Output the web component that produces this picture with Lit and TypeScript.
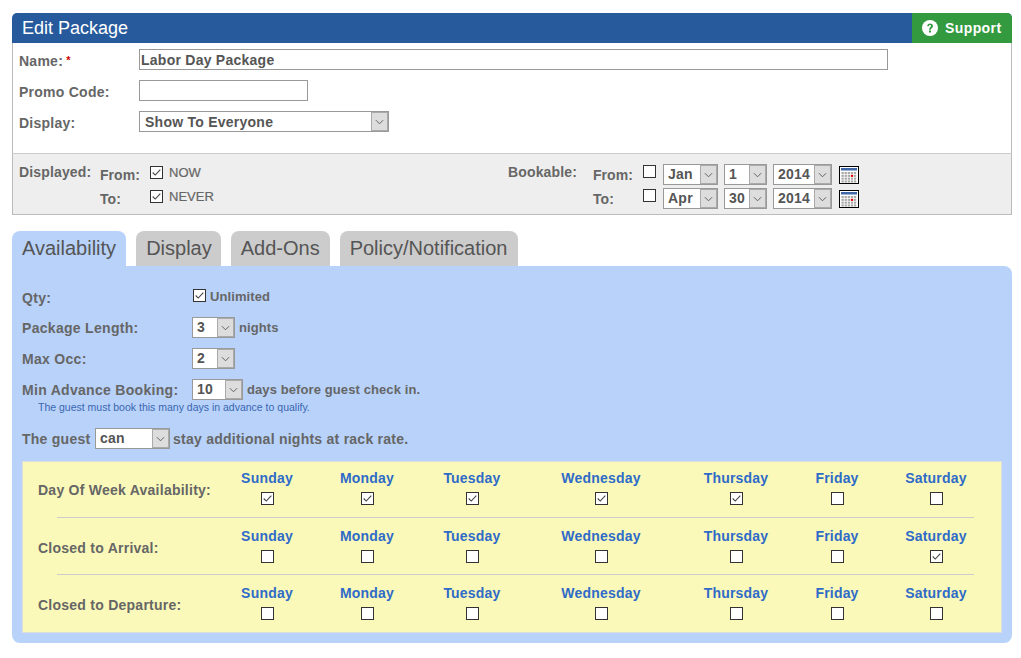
import { LitElement, html, css, svg } from "lit";
import { customElement } from "lit/decorators.js";

const check = svg`<svg class="tick" viewBox="0 0 13 13" width="11" height="11"><path d="M2 6.5 L5 9.5 L11 3" fill="none" stroke="#444" stroke-width="1.3"/></svg>`;

const cb = (on = false) => html`<span class="cb" role="checkbox" aria-checked=${on}>${on ? check : ""}</span>`;

const sel = (text: string, cls: string) => html`<span class="sel ${cls}"><span class="val">${text}</span><span class="arrow"><svg viewBox="0 0 10 6" width="9" height="6"><path d="M1 1 L5 5 L9 1" fill="none" stroke="#555" stroke-width="1"/></svg></span></span>`;

const cal = () => {
  const cells = [];
  for (let r = 0; r < 4; r++) for (let c = 0; c < 5; c++) {
    const red = r === 1 && c === 3;
    cells.push(svg`<rect x=${2.5 + c * 3.1} y=${6 + r * 2.8} width="2.3" height="2.1" fill=${red ? "#d00" : "#aaa"}/>`);
  }
  return html`<svg class="cal" viewBox="0 0 20 18" width="20" height="18"><rect x=".5" y=".5" width="19" height="17" fill="#fff" stroke="#000"/><rect x="2" y="2" width="16" height="2.5" fill="#3f67a8"/>${cells}</svg>`;
};

const DAYS = [
  ["Sunday", 100], ["Monday", 100], ["Tuesday", 110], ["Wednesday", 148],
  ["Thursday", 122], ["Friday", 80], ["Saturday", 118],
] as const;

const ROWS: { label: string; on: number[] }[] = [
  { label: "Day Of Week Availability:", on: [0, 1, 2, 3, 4] },
  { label: "Closed to Arrival:", on: [6] },
  { label: "Closed to Departure:", on: [] },
];

@customElement("app-root")
export class AppRoot extends LitElement {
  static styles = css`
    :host {
      display: block;
      box-sizing: border-box;
      width: 1021px;
      height: 658px;
      padding: 13px 9px 0 12px;
      background: #fff;
      font: bold 14px "Liberation Sans", Arial, sans-serif;
      letter-spacing: 0.25px;
      color: #666;
      overflow: hidden;
    }
    * { box-sizing: border-box; }
    .head {
      display: flex;
      justify-content: space-between;
      height: 30px;
      background: #275a9c;
      border-radius: 5px 5px 0 0;
      overflow: hidden;
    }
    .title {
      padding-left: 10px;
      font: normal 18px/30px "Liberation Sans", Arial, sans-serif;
      letter-spacing: 0;
      color: #fff;
    }
    .support {
      display: flex;
      align-items: center;
      gap: 7px;
      width: 100px;
      padding-left: 10px;
      background: #339a40;
      color: #fff;
      font-size: 14px;
      letter-spacing: 0.4px;
    }
    .form {
      height: 110px;
      padding: 6px 6px 0;
      background: #fff;
      border: 1px solid #bbb;
      border-width: 0 1px;
    }
    .frow {
      display: flex;
      align-items: center;
      height: 21px;
      margin-bottom: 10px;
    }
    .flabel { width: 120px; padding-top: 2px; }
    .req { color: #c00; font-size: 11px; position: relative; top: -2px; }
    .input {
      display: block;
      height: 21px;
      border: 1px solid #999;
      background: #fff;
      line-height: 20px;
      padding-left: 1px;
      color: #555;
    }
    .w-name { width: 749px; }
    .w-promo { width: 169px; }
    .sel {
      display: inline-flex;
      height: 21px;
      border: 1px solid #999;
      background: #fff;
      color: #555;
      line-height: 19px;
    }
    .form .sel { line-height: 21px; }
    .val { flex: 1; padding-left: 4px; white-space: nowrap; overflow: hidden; }
    .arrow {
      display: flex;
      align-items: center;
      justify-content: center;
      width: 17px;
      background: #ddd;
      border: 1px solid #aaa;
    }
    .s-display { width: 250px; }
    .s-display .val { padding-left: 5px; }
    .s-mon { width: 55px; }
    .s-day { width: 43px; }
    .s-year { width: 59px; }
    .s-qty { width: 43px; }
    .s-adv { width: 51px; }
    .s-can { width: 75px; }
    .cb {
      display: inline-flex;
      align-items: center;
      justify-content: center;
      flex: none;
      width: 13px;
      height: 13px;
      background: #fff;
      border: 1px solid #333;
    }
    .dates {
      display: flex;
      height: 62px;
      padding-top: 10px;
      background: #eee;
      border: 1px solid #bbb;
      border-top-color: #ccc;
    }
    .dgroup { display: grid; grid-template-rows: 24px 24px; }
    .left { width: 495px; padding-left: 6px; grid-template-columns: 81px 50px auto; }
    .right { grid-template-columns: 85px 50px auto; }
    .glabel { line-height: 16px; letter-spacing: 0.15px; }
    .sub { line-height: 22px; letter-spacing: 0.05px; }
    .chk {
      display: flex;
      align-items: center;
      gap: 6px;
      height: 16px;
      font-weight: normal;
      font-size: 13px;
      letter-spacing: 0;
      -webkit-text-stroke: 0.2px #666;
    }
    .sels { display: flex; align-items: center; height: 21px; }
    .sels .sel { margin-right: 6px; }
    .cbslot { width: 20px; margin-top: -6px; display: flex; }
    .cal { margin-left: 1px; }
    .tabs {
      display: flex;
      gap: 10px;
      margin-top: 16px;
      height: 35px;
    }
    .tab {
      padding: 0 10px;
      font: normal 20px/34px "Liberation Sans", Arial, sans-serif;
      letter-spacing: 0;
      color: #555;
      background: #ccc;
      border-radius: 8px 8px 0 0;
    }
    .tab.on { background: #b8d2fa; }
    .tab.tight { padding-right: 9px; }
    .tab.wide { padding-right: 11px; }
    .panel {
      height: 377px;
      padding: 20px 10px 0;
      background: #b8d2fa;
      border-radius: 0 8px 8px 8px;
    }
    .prow { display: flex; align-items: center; height: 21px; margin-bottom: 10px; }
    .plabel { width: 170px; flex: none; letter-spacing: 0.3px; }
    .plabel.low { padding-top: 2px; }
    .after { margin-left: 4px; font-size: 13px; margin-top: -1px; letter-spacing: 0.1px; }
    .qtychk { margin-left: 1px; margin-top: -2px; }
    .note {
      margin: -9px 0 0 16px;
      height: 20px;
      font: normal 10.5px/12px "Liberation Sans", Arial, sans-serif;
      letter-spacing: 0;
      color: #3a66b0;
    }
    .guest { margin: 7px 0 0; height: 21px; display: flex; align-items: center; }
    .gl { width: 73px; }
    .guest .sel { margin-right: 3px; }
    .week {
      margin-top: 12px;
      height: 172px;
      background: #fbf9b9;
      border: 1px solid #ddd;
    }
    .wrow { position: relative; display: flex; height: 57.5px; }
    .wlabel { width: 194px; padding-left: 15px; padding-top: 20px; }
    .wcol {
      display: flex;
      flex-direction: column;
      align-items: center;
      padding-top: 8px;
      gap: 6px;
      color: #2f6bc8;
      letter-spacing: 0.2px;
    }
    .wrow + .wrow::before {
      content: "";
      position: absolute;
      left: 34px;
      top: -3px;
      width: 917px;
      height: 1px;
      background: #ccc;
    }
  `;

  render() {
    return html`
      <div class="head">
        <div class="title">Edit Package</div>
        <div class="support">
          <svg viewBox="0 0 16 16" width="16" height="16"><circle cx="8" cy="8" r="8" fill="#fff"/><path d="M5.2 6.2 C5.2 4.5 6.5 3.4 8.1 3.4 C9.7 3.4 11 4.4 11 5.9 C11 7.8 8.9 7.8 8.9 9.7 H7.1 C7.1 7.3 9 7.2 9 6.1 C9 5.5 8.6 5.1 8 5.1 C7.4 5.1 7 5.6 7 6.2 Z M7 10.5 H9 V12.4 H7 Z" fill="#339a40"/></svg>
          <span>Support</span>
        </div>
      </div>
      <div class="form">
        <div class="frow"><span class="flabel">Name:<span class="req"> *</span></span><span class="input w-name">Labor Day Package</span></div>
        <div class="frow"><span class="flabel">Promo Code:</span><span class="input w-promo"></span></div>
        <div class="frow"><span class="flabel">Display:</span>${sel("Show To Everyone", "s-display")}</div>
      </div>
      <div class="dates">
        <div class="dgroup left">
          <span class="glabel">Displayed:</span><span class="sub">From:</span><span class="chk">${cb(true)}NOW</span>
          <span></span><span class="sub">To:</span><span class="chk">${cb(true)}NEVER</span>
        </div>
        <div class="dgroup right">
          <span class="glabel">Bookable:</span><span class="sub">From:</span>
          <span class="sels"><span class="cbslot">${cb()}</span>${sel("Jan", "s-mon")}${sel("1", "s-day")}${sel("2014", "s-year")}${cal()}</span>
          <span></span><span class="sub">To:</span>
          <span class="sels"><span class="cbslot">${cb()}</span>${sel("Apr", "s-mon")}${sel("30", "s-day")}${sel("2014", "s-year")}${cal()}</span>
        </div>
      </div>
      <div class="tabs">
        <div class="tab on">Availability</div>
        <div class="tab tight">Display</div>
        <div class="tab">Add-Ons</div>
        <div class="tab wide">Policy/Notification</div>
      </div>
      <div class="panel">
        <div class="prow"><span class="plabel low">Qty:</span><span class="qtychk">${cb(true)}</span><span class="after">Unlimited</span></div>
        <div class="prow"><span class="plabel">Package Length:</span>${sel("3", "s-qty")}<span class="after">nights</span></div>
        <div class="prow"><span class="plabel">Max Occ:</span>${sel("2", "s-qty")}</div>
        <div class="prow"><span class="plabel">Min Advance Booking:</span>${sel("10", "s-adv")}<span class="after">days before guest check in.</span></div>
        <div class="note">The guest must book this many days in advance to qualify.</div>
        <div class="guest"><span class="gl">The guest</span>${sel("can", "s-can")}<span>stay additional nights at rack rate.</span></div>
        <div class="week">
          ${ROWS.map(r => html`<div class="wrow">
            <div class="wlabel">${r.label}</div>
            ${DAYS.map(([d, w], i) => html`<div class="wcol" style="width:${w}px"><span>${d}</span>${cb(r.on.includes(i))}</div>`)}
          </div>`)}
        </div>
      </div>
    `;
  }
}
